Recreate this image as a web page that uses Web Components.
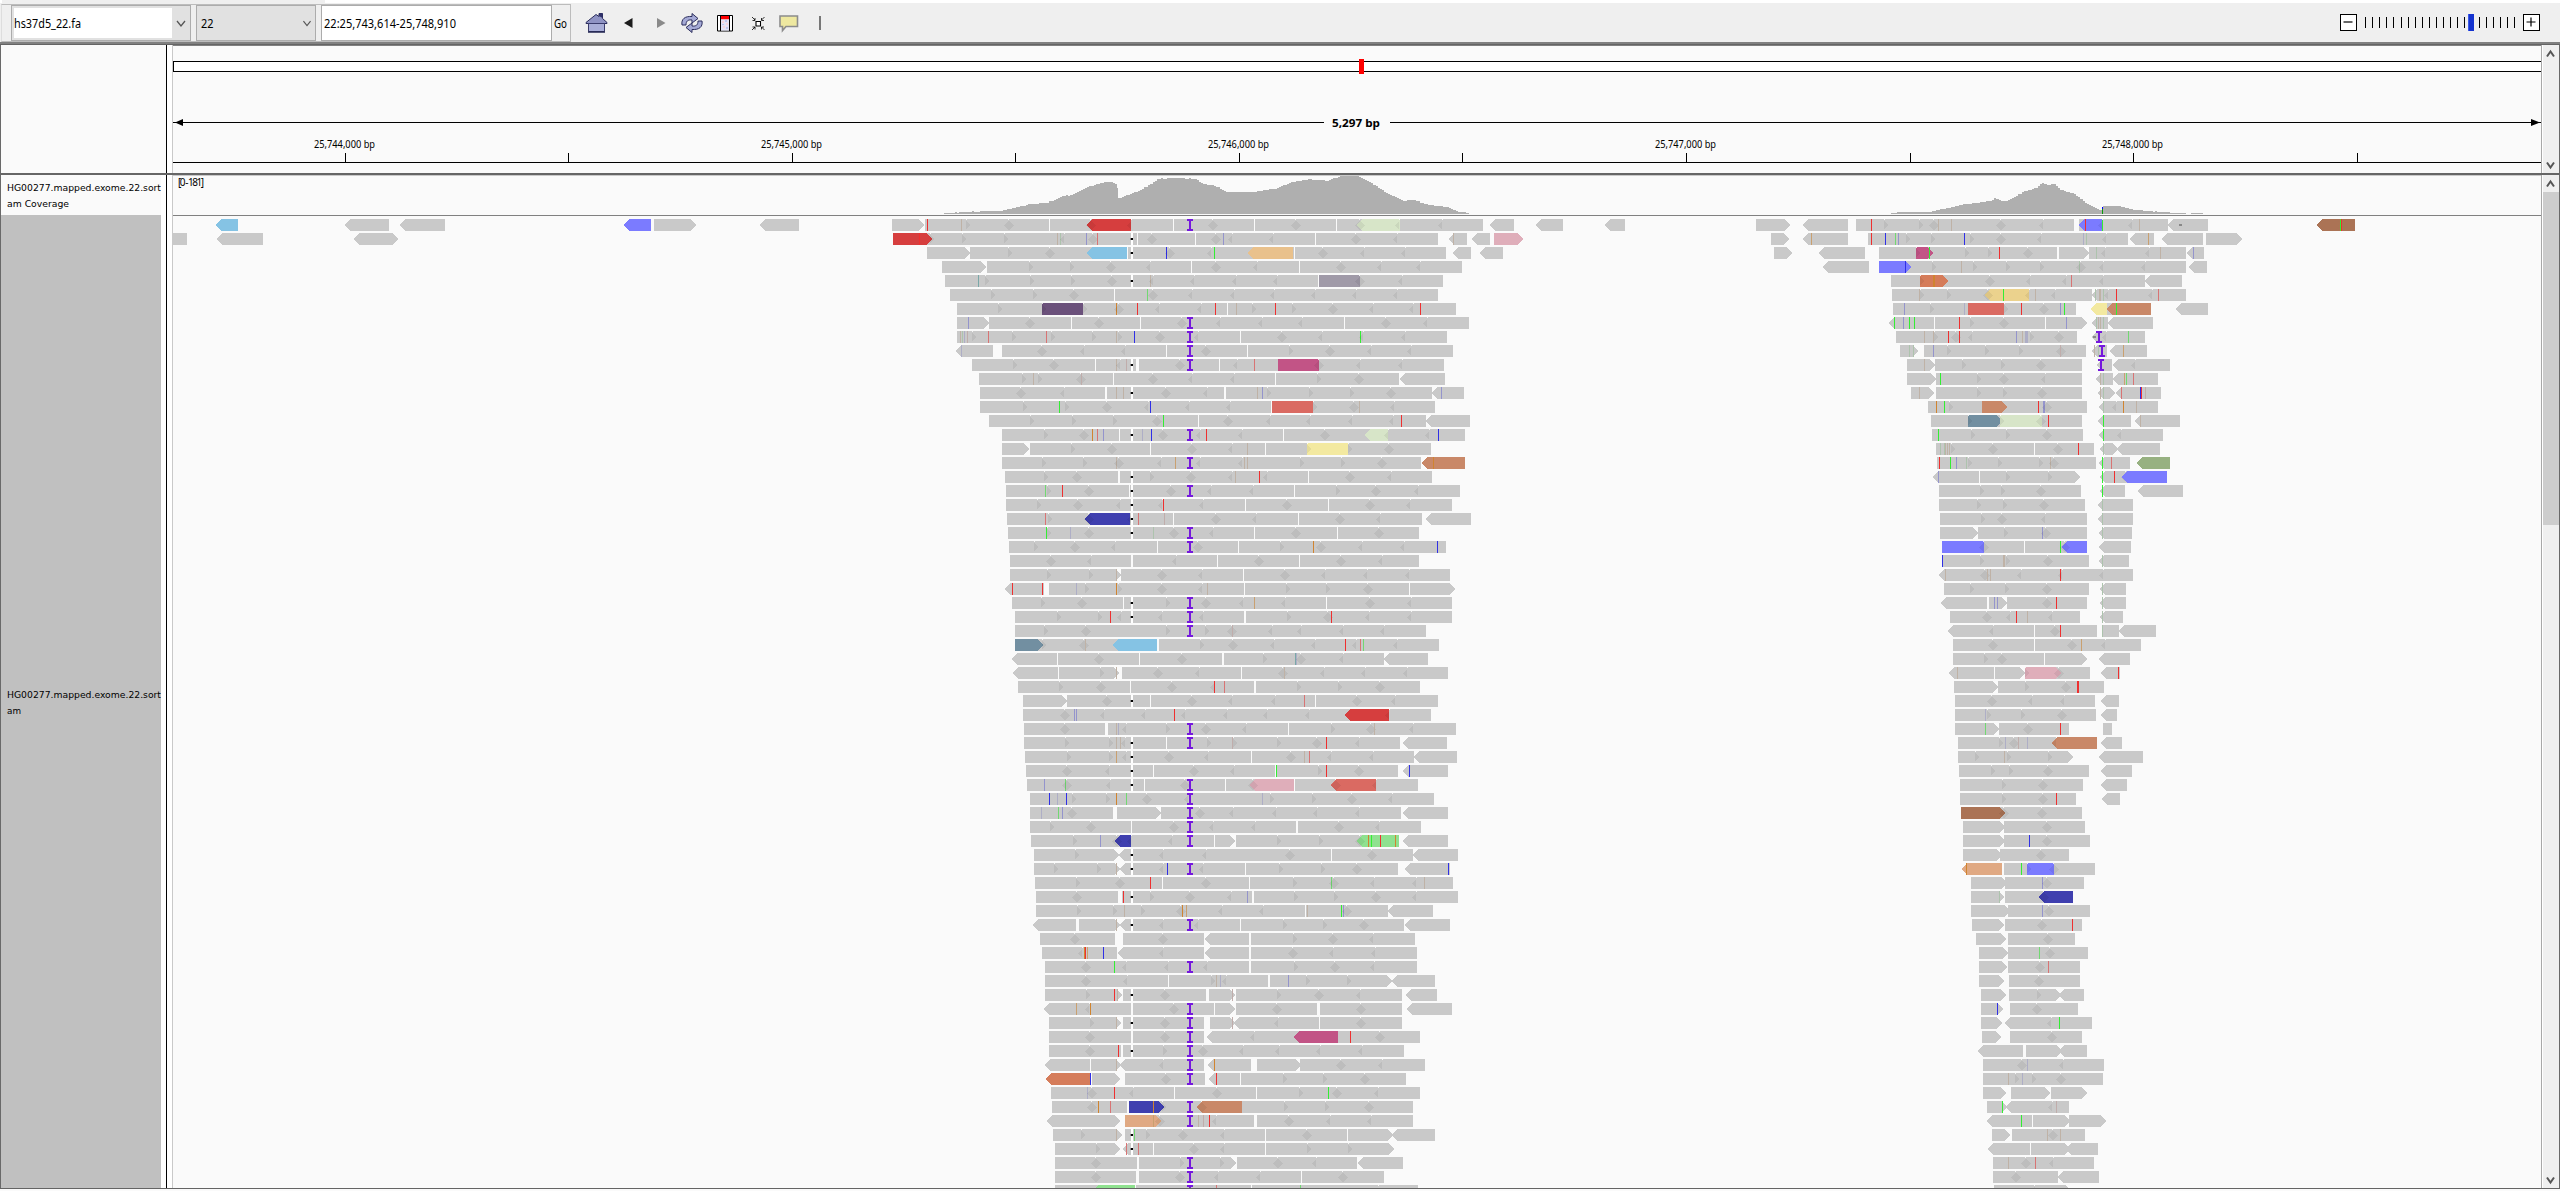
<!DOCTYPE html>
<html lang="en"><head><meta charset="utf-8"><title>IGV</title>
<style>html,body{margin:0;height:100%;overflow:hidden;background:#fafafa}</style></head><body>
<igv-app></igv-app>
<script>
const FONT='"Noto Sans","Open Sans",sans-serif';
const base=(el,css,html)=>{const r=el.attachShadow({mode:'open'});r.innerHTML=`<style>*{box-sizing:border-box}${css}</style>${html}`;return r;};

/* Text fitted to a fixed advance width */
class FitText extends HTMLElement{connectedCallback(){
  const w=+this.getAttribute('w'),s=+this.getAttribute('size')||12,h=Math.ceil(s*1.4);
  base(this,`:host{display:block;line-height:0}svg{display:block;overflow:visible}text{font-family:${this.getAttribute('font')||FONT};font-size:${s}px;fill:#000}`,
  `<svg width="${w}" height="${h}"><text x="0" y="${Math.round(s*1.05)}" textLength="${w}" lengthAdjust="spacingAndGlyphs">${this.getAttribute('text')}</text></svg>`);
}}
customElements.define('fit-text',FitText);

class ComboBox extends HTMLElement{connectedCallback(){
  const ed=this.hasAttribute('editable');
  base(this,`:host{display:flex;height:36px;border:1px solid #acacac;background:#e1e1e1;padding:${ed?'2px 0 2px 2px':'0 0 0 4px'}}
  div{flex:1;display:flex;align-items:center;${ed?'background:#fff':''}}svg{width:${ed?18:16}px;height:100%}`,
  `<div><slot></slot></div><svg viewBox="0 0 18 30" preserveAspectRatio="xMidYMid"><path d="M5 13l4 5 4-5" fill="none" stroke="#555" stroke-width="1.3"/></svg>`);
}}
customElements.define('combo-box',ComboBox);

const ICONS={
home:`<path d="M1 9.500L11 1.500l3 2V.5h3.500V5.500L22 9.500v1H1z" fill="#8f93c4" stroke="#2b2d5c"/><path d="M3.500 10.500h16v8h-16z" fill="#a9aed8" stroke="#3a3c6c"/><path d="M3 19h17" stroke="#222450" stroke-width="1.500"/><path d="M14 .5h3.500V5L14 3z" fill="#2f316a"/>`,
back:`<path d="M9.500 5v10L1 10z" fill="#1c1c1c"/>`,
fwd:`<path d="M1 5v10l8.500-5z" fill="#8a8a8a"/>`,
refresh:`<path d="M1 12C0 6 4 3 11 3.500V.5l6 5-6 4.500V7C7 6.500 5 8 5 12z" fill="#a5aad6" stroke="#2b2d5c"/><path d="M21 8c1 6-3 9-10 8.500v3l-6-5 6-4.500v3c4 .5 6-1 6-5z" fill="#a5aad6" stroke="#2b2d5c"/>`,
roi:`<path d="M.5.500h15v15.500h-15z" fill="#fff" stroke="#000"/><path d="M4 1h8v3.500H4z" fill="#f00"/><path d="M4 4.500h8V15.500H4z" fill="#e3e3f6"/><path d="M5 6h2v2H5zM9 8h2v2H9zM6 11h2v2H6z" fill="#f6d3dc"/><path d="M8 5h2v2H8zM5 9h2v1H5zM9 12h2v2H9z" fill="#bfc4ee"/><path d="M3.500 1v15M12.500 1v15" stroke="#000"/>`,
fit:`<path d="M5 5.500h4.500V10H5z" fill="#fff" stroke="#000" stroke-width="1.100"/><path d="M1 1l3 3M13.500 1l-3 3M1 14l3-3M13.500 14l-3-3M4 2v2.500H1.500M10.500 2v2.500h2.500M4 13.500v-2.500H1.500M10.500 13.500v-2.500h2.500" fill="none" stroke="#000" stroke-width=".8"/>`,
note:`<path d="M1 1h17.500v10.500H7L3.500 15.500v-4H1z" fill="#eee8a0" stroke="#8c8c8c" stroke-width="1.600"/>`};
class ToolIcon extends HTMLElement{connectedCallback(){const w=this.getAttribute('w'),h=this.getAttribute('h');
  base(this,`:host{display:block;line-height:0;margin-left:${this.getAttribute('gap')}px}svg{display:block;overflow:visible}`,`<svg width="${w}" height="${h}">${ICONS[this.getAttribute('name')]}</svg>`);}}
customElements.define('tool-icon',ToolIcon);

class ZoomSlider extends HTMLElement{connectedCallback(){
  let t='';for(let i=0;i<22;i++)t+=i==15?'':`<path d="M${Math.round(8+i*7.1)+.5} 3v11" stroke="#000"/>`;
  base(this,`:host{display:flex;height:17px}b{width:17px;height:17px;border:1.500px solid #000;background:#fff;flex:none}svg{display:block}b svg{width:14px;height:14px}`,
  `<b><svg viewBox="0 0 14 14"><path d="M2.500 7h9" stroke="#000" stroke-width="1.200"/></svg></b><svg width="166" height="17">${t}<path d="M111 0h6v17h-6z" fill="#1433cf"/><path d="M111 0h1v17h-1z" fill="#3c59e8"/></svg><b><svg viewBox="0 0 14 14"><path d="M2.500 7h9M7 2.500v9" stroke="#000" stroke-width="1.200"/></svg></b>`);
}}
customElements.define('zoom-slider',ZoomSlider);

class ToolBar extends HTMLElement{connectedCallback(){
  base(this,`:host{display:flex;height:42px;background:linear-gradient(#efefef,#efefef) 2px 0/323px 3px no-repeat,linear-gradient(#fff 3px,#efefef 3px);padding:4px 20px 0 1px;align-items:flex-start}
  .f{display:flex;height:38px;width:570px;border:1px solid #bcbcbc;border-left-color:#ddd;padding:0 0 0 9px}
  .in{width:231px;margin-left:5px;height:36px;border:1px solid #acacac;background:#fff;display:flex;align-items:center;padding-left:2px}
  .go{margin-left:2px;height:36px;display:flex;align-items:center}
  .i{display:flex;align-items:center;height:38px}.s{width:1.500px;height:14px;background:#777;margin-left:20px}
  zoom-slider{margin:10px 0 0 auto}combo-box{flex:none}`,
  `<div class="f"><combo-box editable style="width:180px"><fit-text text="hs37d5_22.fa" w="67" size="12"></fit-text></combo-box>
  <combo-box style="width:120px;margin-left:5px"><fit-text text="22" w="12.500" size="12"></fit-text></combo-box>
  <div class="in"><fit-text text="22:25,743,614-25,748,910" w="132" size="12"></fit-text></div>
  <div class="go"><fit-text text="Go" w="13" size="12"></fit-text></div></div>
  <div class="i"><tool-icon name="home" w="22" h="20" gap="14"></tool-icon><tool-icon name="back" w="10" h="20" gap="16"></tool-icon><tool-icon name="fwd" w="10" h="20" gap="23"></tool-icon><tool-icon name="refresh" w="22" h="20" gap="15"></tool-icon><tool-icon name="roi" w="16" h="17" gap="14"></tool-icon><tool-icon name="fit" w="15" h="15" gap="18"></tool-icon><tool-icon name="note" w="20" h="17" gap="13"></tool-icon><span class="s"></span></div>
  <zoom-slider></zoom-slider>`);
}}
customElements.define('tool-bar',ToolBar);

class ScrollBar extends HTMLElement{connectedCallback(){
  const th=+this.getAttribute('thumb')||0;
  base(this,`:host{display:flex;flex-direction:column;flex:none;border-left:1px solid #a8a8a8;border-right:1px solid #696969;background:linear-gradient(90deg,#fff 1px,#efefef 1px)}
  div{flex:1;padding-left:1px;min-height:0}i{display:block;width:16px;height:${th}px;background:#cdcdcd}svg{flex:none;display:block;margin-left:1px}`,
  `<svg width="15" height="17"><path d="M4 11.500L7.500 6.500l3.500 5" fill="none" stroke="#555" stroke-width="2"/></svg><div><i></i></div><svg width="15" height="14"><path d="M4 3.500l3.500 5 3.500-5" fill="none" stroke="#555" stroke-width="2"/></svg>`);
}}
customElements.define('scroll-bar',ScrollBar);

/* Ideogram, span arrow and coordinate ticks */
class GenomeRuler extends HTMLElement{connectedCallback(){
  const W=2368;let t='';
  for(let i=0;i<10;i++){const x=Math.floor(172.2+i*223.55);t+=`<path d="M${x+.5} 107v9" stroke="#000"/>`;
    if(i%2==0)t+=`<text x="${x-31}" y="102" textLength="61" lengthAdjust="spacingAndGlyphs">25,74${4+i/2},000 bp</text>`;}
  base(this,`:host{display:block;border-top:1px solid #808080}svg{display:block}text{font:10px ${FONT}}`,
  `<svg width="${W}" height="126"><path d="M.5 15.500H${W}v10H.5z" fill="#fff"/><path d="M0 15.500H${W}M0 25.500H${W}M.5 15v11" stroke="#000" fill="none"/><path d="M1186 13h5v15h-5z" fill="#f00"/>
  <path d="M0 76.500H1151M1217 76.500H${W}" stroke="#000"/><path d="M2 76.500l8-3.500v7zM${W-1} 76.500l-9-3.500v7z"/><text x="1159" y="81" textLength="48" lengthAdjust="spacingAndGlyphs" style="font-size:11px;font-weight:bold">5,297 bp</text>
  ${t}<path d="M0 116.500H${W}" stroke="#000"/></svg>`);
}}
customElements.define('genome-ruler',GenomeRuler);

class CoverageTrack extends HTMLElement{connectedCallback(){
  const step=(pts,off,sc)=>{let d='';const p=pts.map(([x,y])=>[off+x/sc-173,y/3-16]);
    d=`M${Math.round(p[0][0])} 38`;
    for(let i=0;i<p.length-1;i++){const[x0,y0]=p[i],[x1,y1]=p[i+1];const n=Math.max(1,Math.round((x1-x0)/2));
      for(let k=0;k<n;k++){const x=Math.round(x0+(x1-x0)*k/n),y=Math.round(y0+(y1-y0)*k/n+(((k*7+i*3)%5)==0?-.4:0));d+=`H${x}V${y}`;}}
    return d+`H${Math.round(p[p.length-1][0])}V38z`;};
  const A=[[200,159],[240,157],[290,154],[335,153],[360,144],[400,134],[445,128],[480,109],[500,106],[540,80],[580,66],[590,66],[605,72],[610,85],[612,115],[650,98],[680,80],[705,57],[745,54],[795,57],[810,70],[845,80],[870,96],[935,96],[985,86],[1025,66],[1065,58],[1110,62],[1140,48],[1180,48],[1215,70],[1250,100],[1290,123],[1310,119],[1340,132],[1395,143],[1420,155],[1446,159]];
  const B=[[423,159],[445,156],[525,156],[560,148],[590,142],[625,133],[645,132],[700,122],[712,115],[730,122],[750,122],[790,97],[830,83],[845,70],[860,75],[878,72],[895,90],[935,102],[965,128],[1000,148],[1013,151],[1015,138],[1060,139],[1095,148],[1140,153],[1197,158],[1248,160]];
  base(this,`:host{display:block;border-top:1px solid #c9c9c9;border-bottom:1px solid #808080;height:41px}svg{display:block}text{font:10px ${FONT}}`,
  `<svg width="2368" height="39" shape-rendering="crispEdges"><path d="${step(A,860,2.376)}${step(B,1740,2.8)}M2018 37h12v1h-12z" fill="#afafaf"/><path d="M1929 33h1v5h-1z" fill="#0a9a0a"/><path d="M1929 31h1v2h-1z" fill="#00f"/><text x="5" y="10" textLength="26" lengthAdjust="spacing">[0 - 181]</text></svg>`);
}}
customElements.define('coverage-track',CoverageTrack);

const COL={red:'#d63e3e',sky:'#85c3e4',sand:'#e9c18c',mauve:'#a09aa8',plum:'#6b517b',magenta:'#c25486',coral:'#da6a62',lime:'#d7e5c8',yellow:'#f3e9a0',rust:'#c98868',navy:'#3f3faf',slate:'#728fa1',pink:'#dfaeba',green:'#8fe18f',orange:'#d57c5a',tan:'#e0a983',violet:'#7b7bff',gold:'#ebd28d',olive:'#97b181',brown:'#ab7355'};
const MK={R:'#ee3030',M:'#d87474',m:'#c0adab',G:'#33ee33',g:'#72d872',h:'#adc3ad',B:'#3030e6',b:'#9494cc',c:'#aeaec6',O:'#d08430',o:'#c9a070',t:'#bfb2a6',T:'#7aa8a8'};
/* One packed row of reads. [ ] flat ends, < > pointed ends, d/r/l overlaps, | gap,
   *name:a-b:shape coloured read, I insertion, K deletion, letters from MK mismatches. */
function drawRow(spec,off,sc){
  const X=v=>Math.round(off+v/sc-173);let body='',top='',st=null;
  const shape=(a,b,l,r,f)=>{const t=Math.min(5,b-a);return `<path d="${l=='<'?`M${a} 6L${a+t} 0`:`M${a} 12V0`}${r=='>'?`H${b-t}L${b} 6L${b-t} 12`:`H${b}V12`}${l=='<'?`H${a+t}`:''}z" fill="${f}"/>`;};
  for(const k of spec.trim().split(/\s+/)){
    if(!k)continue;const c=k[0],v=parseFloat(k.slice(1)),x=X(v);
    if(c=='['||c=='<')st=[x,c];
    else if(c==']'||c=='>'){if(st)body+=shape(st[0],x,st[1],c,'#c9c9c9');st=null;}
    else if(c=='*'){const[n,ab,sh='']=k.slice(1).split(':');const[a,b]=ab.split('-').map(Number);top+=shape(X(a),X(b),sh.includes('<')?'<':'',sh.includes('>')?'>':'',COL[n]);}
    else if(c=='d')top+=`<path d="M${x-5} 6.500L${x} 1l5 5.500-5 5z" fill="#000" fill-opacity=".06"/><path d="M${x-1} 0h1v1h-1z" fill="#fff" fill-opacity=".8"/>`;
    else if(c=='r')top+=`<path d="M${x} 1l4 5-4 5z" fill="#000" fill-opacity=".06"/><path d="M${x} 0h1v1h-1z" fill="#fff" fill-opacity=".8"/>`;
    else if(c=='l')top+=`<path d="M${x} 2v9l-4-4.500z" fill="#000" fill-opacity=".06"/><path d="M${x} 0h1v1h-1z" fill="#fff" fill-opacity=".8"/>`;
    else if(c=='|')top+=`<path d="M${x} 0h1v12h-1z" fill="#fafafa"/>`;
    else if(c=='I'){const i=k.length>1?x:1017;top+=`<path d="M${i-3} 0h6v2h-2v8h2v2h-6v-2h2V2h-2z" fill="#7518dc"/>`;}
    else if(c=='K')top+=`<path d="M958 0h2v12h-2z" fill="#fff"/><path d="M957 5h1v2h-1z" fill="#888"/><path d="M958 5h2v2h-2z" fill="#000"/>`;
    else if(c=='k')top+=`<path d="M${x-1} 5h3v2h-3z" fill="#888"/>`;
    else if(c=='W')top+=`<path d="M958 0h2v12h-2z" fill="#fafafa"/>`;
    else if(MK[c]){const w=k.endsWith('w')&&sc!=2.376?2:1;top+=`<path d="M${x} 0h${w}v12h-${w}z" fill="${MK[c]}"/>`;}
  }
  return body+top;
}
const EDGE=[`<215.5 ]238 *sky:215.5-238:< <344.5 ]389 <400 ]445 <624 ]651 *violet:624-651:< [654 >696 <760 ]799 <1536 ]1563 <1605 ]1625 <2316.5 ]2355 *brown:2316.5-2355:< G2340 R2341`,
`[173 ]187 <217 ]263 <354 >398 [1494 >1523 *pink:1494-1523:>`];
const A=`[76 >151 [154 R160 t239 r253 d353 |450 *red:540-643:< d548 l643 |744 I d838 |937 d1035 |1132 *lime:1180-1283:< d1187 l1281 l1383 ]1480 <1498 ]1554
[78 *red:78-170:> R141 r167 r242 r342 t469 h476 l484 b536 d553 M564 K |657 d694 |795 d847 b863 l883 l981 |1080 d1178 l1275 ]1373 <1400 t1410 ]1442 <1454 ]1497
[159 >261 [261 r352 d451 *sky:540-634:< |635 K B726 d737 l833 G840 *sand:923-1029:< |1030 d1100 l1197 l1295 ]1392 <1409 ]1452 <1472 ]1528
[195 >300 [302 r401 r499 d596 l688 |787 d847 l944 |1043 d1142 l1237 l1331 ]1430
[202 T281w r297 r404 r502 d598 K t688 l695 l793 l893 l990 |1088 *mauve:1090-1188 d1187 l1287 ]1385
[214 r311 r410 d508 |604 g683 d695 l790 l888 l984 l1080 l1178 l1275 ]1373
[230 r328 *plum:432-530 r432 r530 O609w d615 R659 l711 l810 R844w |872 t894 r931 R987 r1027 d1123 l1218 l1315 R1331w ]1416
[230 b257 >306 [306 d404 |502 d569 |666 d764 I l856 l954 l1051 |1150 d1250 l1348 ]1447
[230 t238 h243 c248 m255w r266 M305 r360 M441 r454 r552 t609 r613 B652 d713 I l803 |903 d1002 l1097 G1187 l1194 l1294 ]1395
<227 c239 ]316 [337 d433 l532 l630 |728 I d822 |919 r1020 d1117 l1214 l1310 ]1409
[266 r363 d461 |558 t609 l617 m633 K ]656 [663 d760 I |852 l895 M935 *magenta:993-1090 d1091 l1187 l1287 ]1387
[283 r385 t412 r424 d525 m525 |601 d696 l790 l888 |986 r1087 d1185 ]1281 <1284 ]1390
[285 d382 l484 ]582 [587 t609 t626 K d726 l824 ]865 [870 t944 b956 r967 r1068 r1164 d1262 ]1360 <1360 b1381 ]1435
[285 r387 G474 r487 d586 l684 B688 l781 l879 |976 *coral:979-1076 r1077 d1173 t1185 l1269 ]1366
[306 r404 r503 r602 d705 G721 |803 d875 l973 l1070 l1169 l1266 R1286 ]1345 <1345 ]1449
[337 r436 d533 O552w M564 b578 |616 K c671 B692w d719 I l808 R821 l908 |1006 d1105 *lime:1201-1254:< l1254 l1353 B1374 ]1437
[337 >402 [404 r502 d598 |690 d788 l884 t920 |963 *yellow:1062-1159 r1062 r1159 d1257 ]1357
[337 r433 r530 t609 d615 l714 o749 I l808 l908 t913 t920 r1046 r1143 d1241 ]1333 <1335 *rust:1335-1437:< O1362 ]1437
[344 r437 d515 ]613 [618 K r690 d786 l883 t890 R949 l966 |1065 d1165 l1261 ]1359
[347 g440 r445 R481 d543 |640 K d740 I l833 l933 |1031 r1132 d1227 l1325 ]1425
[347 r421 d517 l617 K l717 R721 l814 |915 d1015 |1112 d1211 l1306 ]1406
[349 M440 r447 *navy:534-641:< d544 l643 K M661w m723w |744 d845 l942 |1041 d1140 l1236 ]1335 <1345 ]1452
[352 G443 r445 c500 d545 K h697 d745 I l838 |937 d1036 |1133 d1232 ]1328
[354 r413 d510 l607 |706 d803 I |898 r999 O1077w d1095 l1192 l1292 B1372 ]1392
[356 d453 l550 W l750 |849 d947 |1043 d1142 l1240 ]1328
[356 r444 r543 t609 >619 [620 d717 l812 |911 d1009 l1104 l1204 l1304 ]1402
<344 R360 R433w ]437 [449 c514 r535 O609w r614 d717 l812 t825 |913 r1011 r1107 d1207 |1305 >1413
[361 r430 d527 |626 K r728 d823 I l911 o937 l1009 |1107 d1211 l1309 ]1406
[368 r468 r566 R595 l620 K l718 I l814 ]912 [917 r1015 d1112 R1120 l1210 l1309 ]1406
[368 r437 d536 r726 I r820 d884 m883 l980 l1047 l1147 l1245 ]1345
[368 *slate:368-434:> r432 d532 t534 *sky:600-706:< ]706 [710 r809 d887 l983 l1080 R1153w l1178 M1189 g1194 l1276 ]1376
<361 |468 d567 |664 d764 ]860 [865 r957 T1034 c1037 d1049 l1147 ]1245 <1245 ]1349
<363 |470 r571 t609 >615 [622 d709 l806 |906 d1005 t1008 l1102 l1199 l1299 ]1397
[375 r473 d572 |641 d742 l841 R842 M866 ]936 [941 r1038 r1136 d1235 ]1330
[387 >491 [491 d588 K |689 d788 l885 l985 M1056 |1080 d1180 l1272 ]1373
[387 d486 b509 b514 l579 l677 R747 l773 l872 l968 l1066 *red:1152-1257:< l1256 ]1357
[390 d488 ]582 [589 t609w c613 l631 r728 I d822 l918 |1018 r1119 d1215 t1222 l1315 ]1416
[390 r488 r592 t609w t618 l629 K |728 I r824 m883 r886 r991 d1087 R1108 l1186 ]1283 <1289 ]1395
[392 r491 r592 o609 l633 K d734 l828 |928 d1025 t1056 M1068 l1120 l1218 ]1316 <1316 ]1418
[394 d493 l592 K |695 d793 l888 |986 G989w r1089 R1108 d1186 ]1278 <1290 B1305w ]1397
[397 b436 g486 d493 l593 K |675 d773 I |868 *pink:926-1031:< d934 |1031 *coral:1119-1226:< d1131 l1226 ]1326
[404 B448 c469 B490w r503 r584 O609w g633 d683 l780 I c956 r975 r1073 d1168 l1264 ]1364
[404 c429 g471w b479 d503 ]601 [611 >715 [715 I d808 l886 l988 l1085 l1185 ]1285 <1290 ]1397
[404 r451 d548 |645 d745 I l839 l938 ]1036 [1041 d1137 l1234 ]1333
[406 r506 b571 *navy:606-644:< d610 l644 l742 I |840 >891 [893 r991 r1090 *green:1180-1281:< d1187 O1208 G1215 R1236w O1270 ]1281 <1290 ]1397
[413 r511 >615 <615 K l720 l822 d1022 |1119 d1217 ]1314 <1315 ]1421
[413 r461 r562 t609 >617 <617 K l720 B730w I l815 |915 r996 r1095 d1181 ]1278 <1295 B1398 ]1402
[416 r513 d617 R690 |718 d822 |925 r1029 g1120 d1127 l1222 l1322 t1341 ]1409
[418 d515 ]613 [622 R626 K r688 d785 l882 b920w ]931 [936 r1030 r1127 d1226 l1322 ]1421
[418 r516 r601 t628 r668 d763 O766 o775 l861 l958 |1058 t1061 G1144 b1148w d1156 ]1254 <1255 ]1361
<411 ]513 [520 t609 >618 <618 K l720 I l802 |903 r1004 r1101 d1197 ]1292 <1295 ]1402
[428 d510 ]606 [625 d721 ]817 <819 ]924 [929 r1029 d1123 l1219 ]1319
[432 l528 O533 R535 o540 B578w ]611 <613 l719 ]817 <819 ]924 [929 d1029 l1124 l1223 ]1323
[440 d536 G604w l633 l731 I l825 ]924 [929 r1030 d1128 l1222 ]1323
[440 d536 l634 |732 r833 t847 c856w l870 ]969 [974 b1018 r1060 r1158 >1263 <1263 ]1366
[440 r537 R604w t610 >622 [625 K d725 ]822 [829 m883 >891 [893 r991 d1090 l1187 ]1288 <1297 ]1371
<438 o514 l543 O547 ]644 [649 d745 I |840 >891 [893 d990 ]1086 [1093 d1191 ]1288 <1300 ]1406
[449 r547 t609 >620 [625 K d725 I ]817 [832 m883 >891 <888 l992 |1090 d1191 ]1288
[449 d547 W d725 I ]817 <825 l935 *magenta:1031-1136:< R1165 d1235 ]1330
[449 d547 R612 ]620 [625 K r721 I d814 l910 l996 l1093 l1193 ]1292
<440 |547 t609 >620 <618 l721 I ]817 <828 O840 ]929 [943 >1048 [1046 d1142 l1240 ]1342
<442 *orange:442-548:< B547w |550 >617 [630 d726 I ]820 <830 R847 |903 r1004 r1101 d1199 ]1297
[454 c540 d552 R604w l648 |746 d848 |940 r1044 G1113 d1134 l1230 ]1330
[456 d552 O566w M595 ]634 [639 *navy:639-722:> O695 r718 I *rust:801-908:< d812 r1008 r1106 d1210 ]1314
<445 >617 [630 *tan:630-715:> o697 d712 I t804 m814 R830w l845 ]936 [943 d1020 l1116 l1214 ]1314
[459 r526 t609 >622 [630 K g652 r680 d768 l864 |963 d1061 |1158 >1266 <1264 ]1366
[463 r561 >617 <624 M633 K M661w |695 d793 l865 |963 r1062 r1160 >1269
[463 d561 ]658 [663 r761 I r855 >894 [896 d994 l1083 ]1181 <1184 ]1290
[463 d561 ]656 [663 d760 I l851 l950 |1048 d1148 ]1245
[463 *green:553-653:< |654 I M847 |930 g1046w l1230 ]1326`.split('\n');
const B1=`[45 >139 <177 ]302 [325 R368 r403 r501 d543 t553 t592 d731 l847 ]935 [948 *violet:948-1015:< R967 G1014 l1014 l1097 t1118 ]1198 <1198 k1233 ]1310
[87 >137 <177 o200 ]302 [358 R368 B407 g435 b441 r464 r534 B628 r643 d730 l842 c961 h970 l1024 ]1086 <1093 o1143 ]1159 <1182 ]1296 [1305 >1406
[95 >145 <222 ]350 [389 *magenta:493-540:> r493 G530 r630 r693 R726 d807 ]888 [893 >977 [977 h998 l1023 l1144 t1177 ]1249 <1251 b1267 ]1299
<232 ]361 [389 *violet:389-478:> B463 r538 t620 r652 r746 r840 h950 d955 l1017 l1133 ]1249 <1257 ]1308
[423 *orange:504-583:> r504 O540 O544 d699 l811 l912 M928 l1015 ]1134 <1135 ]1238
[426 t500 r505 r580 *gold:685-808:< d695 G737 l808 t827 l881 ]986 <986 h993 t1004 t1009 h1015 l1031 R1054 l1153 M1169 ]1249
[428 b460 r533 c628 *coral:638-738 r738 R788 d850 b897 G908 ]941 <982 *yellow:982-1028:< *rust:1028-1151:< G1054 ]1151 <1222 ]1310
<418 G432 b457 G474 G488 |544 R614 r645 d740 |854 b914 >972 <985 h998 t1003 t1009 h1015 ]1030 <1031 ]1156
[437 t516 t539 r543 R583 d604 R614 l649 b773 t790 c797w c801w r812 d893 ]944 <985 k991 I1005 l1025 g1085 ]1134
[448 h474 h483 >497 [515 b539 r580 r686 r782 d898 m897 ]969 <986 t992 h1003 I1013 ]1028 <1037 o1073 ]1140
[468 t516 >547 [547 r621 r731 d842 ]958 <1000 I1010 ]1042 <1045 l1105 ]1204
[468 >548 [549 G561 r664 d739 l853 ]958 <998 t1007 h1015 ]1044 <1044 o1074 g1082 M1099 ]1170
[479 t500 >542 [549 r664 r737 d845 ]958 <1001 t1007 h1015 >1050 <1052 M1068 B1121 R1124 m1135 ]1179
[526 O550 G572 r586 *rust:678-748:> R835 b848w d860 ]972 <1006 h1015 l1053 O1073 t1110 ]1170
[535 *slate:638-733:> r638 *lime:729-845 d842 r729 R863 ]958 <1001 G1015 ]1095 <1107 t1121 ]1232
[538 G555 r647 r746 d860 ]960 <1006 G1015 l1068 ]1184
[549 h561 h570 t574 t580 t586 r592 d707 |824 d890 R947 ]991 <1008 h1015 >1058 <1056 ]1176
[552 R558 G589 b606 h634 r638 r722 r837 t869 d880 ]997 <1005 G1014 M1040 ]1092 <1112 *olive:1112-1204:< ]1204
<540 b555 |670 r744 r863 >952 <1008 G1014 R1048 l1077 *violet:1070-1196:< ]1196
[557 r672 r731 d842 ]955 <1008 G1014 ]1078 <1115 ]1240`.split('\n');
const B2=`[297 r412 r489 d612 ]735 <774 h787 ]879
[300 r423 d487 l614 ]741 <774 h787 ]879
[300 >413 [414 r492 b607 d618 ]741 <777 h787 ]876
[306 *violet:306-432 d431 |552 G661 *violet:666-741:< d676 ]741 <778 ]873
[306 B307 r420 t488 t493 r499 d623 ]747 <777 h787 ]867
<298 t316 d436 t442 t451 l543 R661 l665 l788 ]879
[312 r390 r496 d620 ]747 <780 h787 ]858
<303 ]441 [447 b463 b472 >501 [501 d622 R649 ]741 <780 h787 ]858
[330 d440 l509 R529 t562 l636 ]720 <780 h787 ]849
<324 l459 |583 d646 R661 ]771 [786 h787 ]837 <837 ]948
[339 d460 |583 d697 o724 l795 ]903
[339 r432 d487 |613 >741 <777 ]870
<327 t352 |463 >555 *pink:555-664:> [555 r555 d658 ]750 <783 R835 ]840
[342 >474 [474 r555 d677 R712w ]792
[345 d455 l576 l671 ]765 <783 ]837
[345 c436 r441 r543 d665 ]768 <783 ]831
[345 g436 >477 [477 d565 R661 ]687 [789 ]816
[354 r477 c496 d522 m535 c562 *rust:636-771:< l648 ]771 <783 ]846
[354 r405 t493 r501 r624 >699 <778 ]909
[357 r452 r507 d623 ]747 <783 ]876
[360 r486 d608 ]729 <783 ]861
[360 r486 d608 R649 ]708 <786 ]840
[363 *brown:363-495:> d491 d605 ]726
[369 >495 [492 d620 ]735
[369 >495 [492 B568 d620 ]750
[369 >486 [480 d603 ]687
<366 *tan:366-486:< O378 ]486 [492 G544 *violet:561-642 r561 d642 ]765
[393 >501 [495 b607 d622 ]732
[393 h478 >492 [495 *navy:597-699:< d611 ]699
[393 >510 [504 b607 d627 ]750
[396 >492 [495 d605 R697 ]726
[408 >498 [504 d625 ]705
[417 >504 [504 g598 d629 ]744
[417 >501 [504 d599 M625 ]720
[417 >492 [507 d596 ]720
[423 >498 [507 r591 >663 <657 ]732
[423 B472 >489 [510 d592 ]714
[423 >486 <495 l633 G658 ]756
[426 >483 [510 d635 ]726
<414 ]549 [558 >666 <657 ]741
[429 d547 c562 l668 ]792
[429 t505 r525 c547 r576 d662 ]789
[429 >498 [513 >630 [633 >741
[441 G487 >501 <498 l636 m649 ]687
<441 G544 |577 >690 [687 >798
[456 >510 [516 t622 d639 t661 ]735
<444 |571 >690 <678 ]774
[459 t505 d559 M586 l638 ]762
[459 d528 ]654 <655 ]777
[462 r583 >693`.split('\n');

class ReadRow extends HTMLElement{connectedCallback(){
  const i=+this.getAttribute('index');
  const g=drawRow(A[i]||'',860,2.376)+(i<20?drawRow(B1[i],1740,2.8):drawRow(B2[i-20]||'',1840,3))+(EDGE[i]?drawRow(EDGE[i],0,1):'');
  base(this,`:host{display:block;height:12px;flex:none}svg{display:block}`,`<svg width="2368" height="12" shape-rendering="crispEdges">${g}</svg>`);
}}
customElements.define('read-row',ReadRow);
class AlignmentTrack extends HTMLElement{connectedCallback(){
  base(this,`:host{display:flex;flex-direction:column;gap:2px;padding-top:3px;flex:1;min-height:0;overflow:hidden}`,
  A.map((_,i)=>`<read-row index="${i}"></read-row>`).join(''));
}}
customElements.define('alignment-track',AlignmentTrack);

class TrackName extends HTMLElement{connectedCallback(){
  const f='DejaVu Sans,sans-serif';
  base(this,`:host{display:block;width:160px;padding-left:6px}fit-text{height:16px}`,
  `<fit-text text="HG00277.mapped.exome.22.sort" w="154" size="9.5" font="${f}"></fit-text><fit-text text="${this.getAttribute('second')}" w="${this.getAttribute('w')}" size="9.5" font="${f}"></fit-text>`);
}}
customElements.define('track-name',TrackName);

class IgvApp extends HTMLElement{connectedCallback(){
  base(this,`:host{display:flex;flex-direction:column;height:1191px;width:2560px;background:#fafafa}
  .rule{height:3px;flex:none;background:linear-gradient(#808080 0 2px,#646464 2px)}
  .p{display:flex}.head{height:128px;flex:none}.data{height:1014px;border-bottom:1px solid #646464}
  .n{width:173px;flex:none;display:flex;border-left:1px solid #696969;border-right:1px solid #c9c9c9}
  .n>.a{width:160px;display:flex;flex-direction:column}.head .a{width:165px}.n>.b{flex:1;background:#fff}.n>.c{width:1px;background:#000}.n>.e{width:5px;background:#fff}
  .m{width:2368px;flex:none;display:flex;flex-direction:column;min-height:0}
  .cov{height:40px;padding-top:6px;flex:none}.al{flex:1;background:#c0c0c0;padding-top:473px}scroll-bar{width:19px}`,
  `<tool-bar></tool-bar><div class="rule"></div>
  <div class="p head"><div class="n"><div class="a"></div><div class="c"></div><div class="b"></div></div><div class="m"><genome-ruler></genome-ruler></div><scroll-bar></scroll-bar></div>
  <div class="rule" style="height:2px;background:#666"></div>
  <div class="p data"><div class="n"><div class="a"><div class="cov"><track-name second="am Coverage" w="62"></track-name></div><div class="al"><track-name second="am" w="14"></track-name></div></div><div class="e"></div><div class="c"></div><div class="b"></div></div>
  <div class="m"><coverage-track></coverage-track><alignment-track></alignment-track></div><scroll-bar thumb="333"></scroll-bar></div>`);
}}
customElements.define('igv-app',IgvApp);
</script></body></html>
